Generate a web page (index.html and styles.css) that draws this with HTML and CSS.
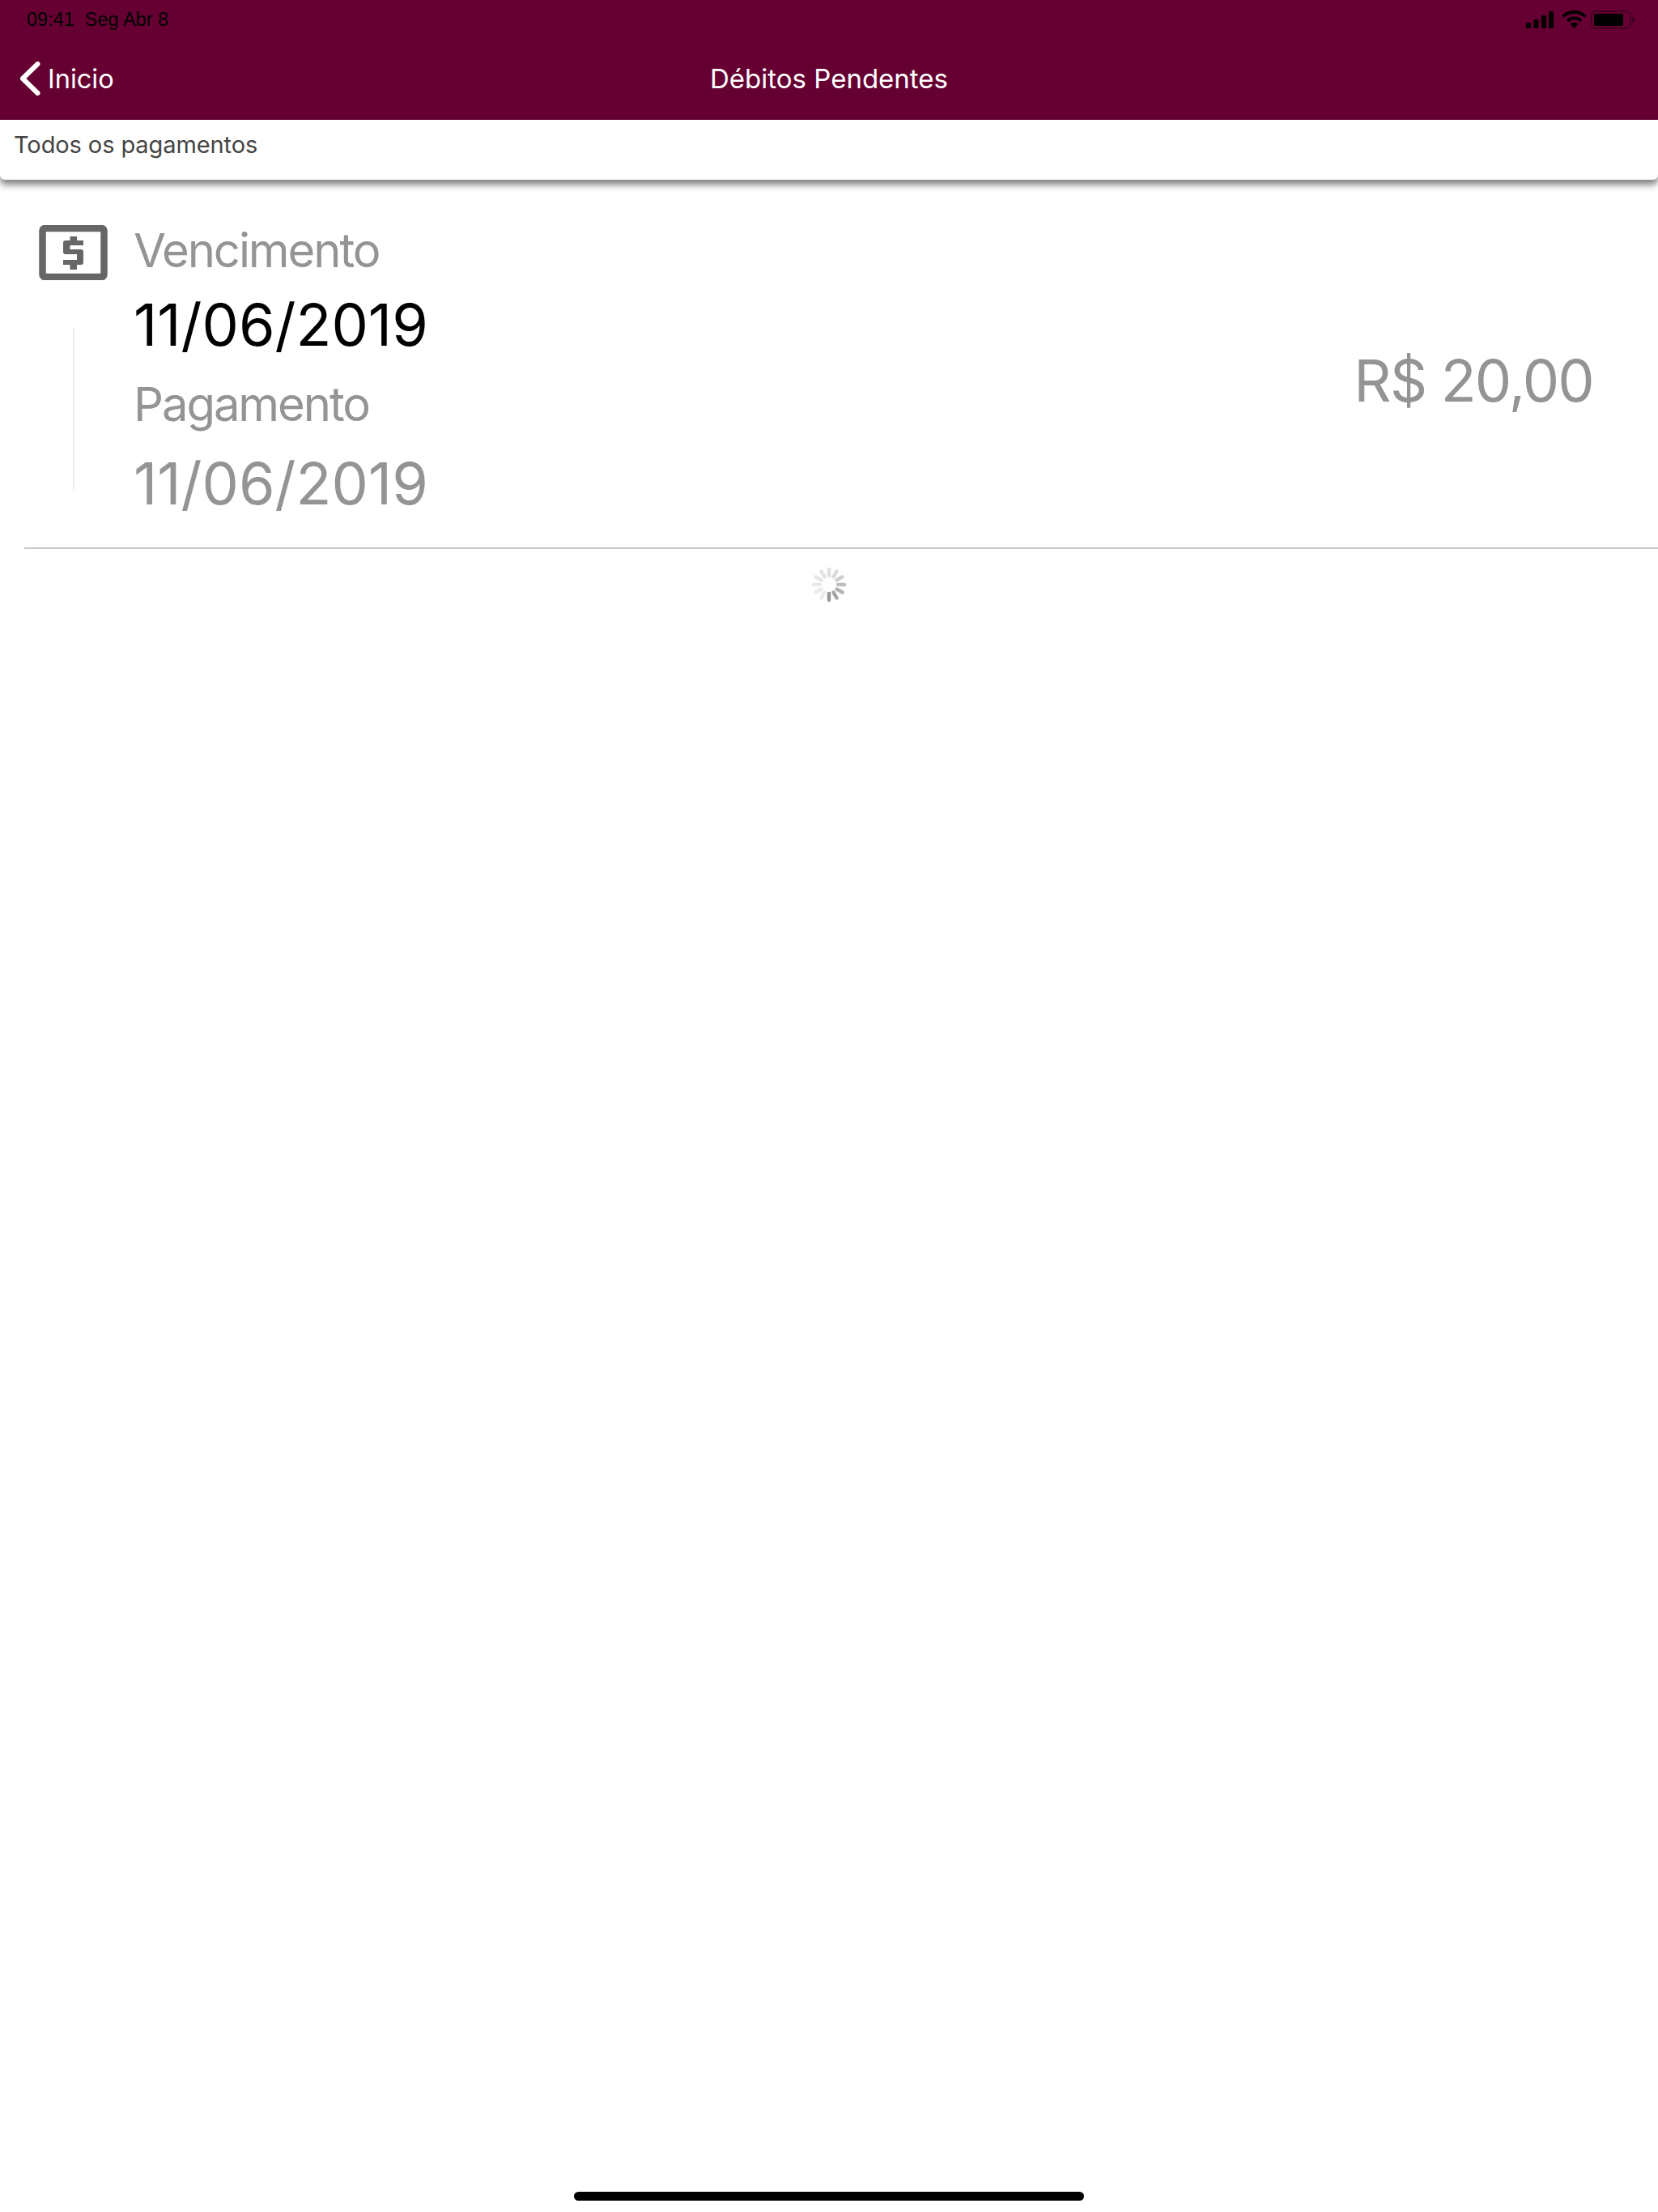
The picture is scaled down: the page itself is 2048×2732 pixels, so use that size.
FILE: index.html
```html
<!DOCTYPE html>
<html>
<head>
    <meta charset="utf-8">
    <title>Débitos Pendentes</title>
    <link rel="stylesheet" href="styles.css">
</head>
<body>

<div class="page">
    <div class="header">
        <!-- Status bar -->
        <div class="status-bar">
            <span class="status-time">09:41&nbsp; Seg Abr 8</span>
            <div class="status-icons">
                <svg class="icon-signal" width="34" height="21" viewBox="0 0 34 21">
                    <rect x="0" y="14" width="6" height="7" rx="1.5"/>
                    <rect x="9.5" y="10" width="6" height="11" rx="1.5"/>
                    <rect x="19" y="5" width="6" height="16" rx="1.5"/>
                    <rect x="28" y="0" width="6" height="21" rx="1.5"/>
                </svg>
                <svg class="icon-wifi" width="31" height="22" viewBox="0 0 31 22">
                    <path d="M15.5 0C9.6 0 4.3 2.3.3 6.1l2.6 2.7C6.2 5.700 10.600 3.800 15.500 3.800s9.300 1.900 12.600 5l2.600-2.700C26.700 2.300 21.400 0 15.500 0z"/>
                    <path d="M15.500 7.500c-3.800 0-7.300 1.500-9.900 3.900l2.700 2.700c1.900-1.700 4.400-2.800 7.200-2.800s5.300 1.100 7.200 2.800l2.700-2.700c-2.600-2.400-6.100-3.900-9.900-3.900z"/>
                    <path d="M15.500 14.800c-2 0-3.700.7-5 1.900l5 5.300 5-5.300c-1.300-1.200-3-1.900-5-1.900z"/>
                </svg>
                <div class="battery">
                    <div class="battery-fill"></div>
                </div>
                <div class="battery-nub"></div>
            </div>
        </div>

        <!-- Navigation bar -->
        <div class="nav-bar">
            <div class="nav-back">
                <svg width="26" height="42" viewBox="0 0 26 42">
                    <path d="M22.500 3 L4 21 L22.500 39" fill="none" stroke="#fff" stroke-width="6" stroke-linecap="round" stroke-linejoin="round"/>
                </svg>
                <span>Inicio</span>
            </div>
            <div class="nav-title">Débitos Pendentes</div>
            <div></div>
        </div>
    </div>

    <div class="filter-bar">Todos os pagamentos</div>

    <!-- Payment row -->
    <div class="payment-row">
        <div class="payment-side">
            <svg class="payment-icon" width="85" height="68" viewBox="0 0 85 68">
                <rect x="4.500" y="4" width="76" height="60" rx="3" fill="none" stroke="#666" stroke-width="8.500"/>
                <path d="M38.500 14h8.500v5h8v6H38.500v5H52a3 3 0 0 1 3 3v13a3 3 0 0 1-3 3h-5v6h-8.500v-6H30v-6h17v-7H33a3 3 0 0 1-3-3V22a3 3 0 0 1 3-3h5.500z" fill="#666"/>
            </svg>
            <div class="payment-rule"></div>
        </div>
        <div class="payment-dates">
            <div class="date-label date-label-first">Vencimento</div>
            <div class="date-value date-value-due">11/06/2019</div>
            <div class="date-label">Pagamento</div>
            <div class="date-value">11/06/2019</div>
        </div>
        <div class="payment-amount">R$ 20,00</div>
    </div>

    <!-- Loading spinner -->
    <div class="spinner-wrap">
        <svg width="44" height="44" viewBox="-22 -22 44 44">
            <g stroke-width="4.500" stroke-linecap="round">
                <line x1="0" y1="-11" x2="0" y2="-19" stroke="#e0e0e0"/>
                <line x1="0" y1="-11" x2="0" y2="-19" stroke="#dcdcdc" transform="rotate(30)"/>
                <line x1="0" y1="-11" x2="0" y2="-19" stroke="#d0d0d0" transform="rotate(60)"/>
                <line x1="0" y1="-11" x2="0" y2="-19" stroke="#bdbdbd" transform="rotate(90)"/>
                <line x1="0" y1="-11" x2="0" y2="-19" stroke="#b2b2b2" transform="rotate(120)"/>
                <line x1="0" y1="-11" x2="0" y2="-19" stroke="#a6a6a6" transform="rotate(150)"/>
                <line x1="0" y1="-11" x2="0" y2="-19" stroke="#999" transform="rotate(180)"/>
                <line x1="0" y1="-11" x2="0" y2="-19" stroke="#ececec" transform="rotate(210)"/>
                <line x1="0" y1="-11" x2="0" y2="-19" stroke="#eaeaea" transform="rotate(240)"/>
                <line x1="0" y1="-11" x2="0" y2="-19" stroke="#e8e8e8" transform="rotate(270)"/>
                <line x1="0" y1="-11" x2="0" y2="-19" stroke="#e6e6e6" transform="rotate(300)"/>
                <line x1="0" y1="-11" x2="0" y2="-19" stroke="#e3e3e3" transform="rotate(330)"/>
            </g>
        </svg>
    </div>

    <div class="home-indicator"></div>
</div>

</body>
</html>
```

FILE: styles.css
```css
html, body {
    margin: 0;
    padding: 0;
    background-color: #fff;
}

.page {
    height: 2732px;
    display: flex;
    flex-direction: column;
    overflow: hidden;
    font-family: "Inter", "Liberation Sans", sans-serif;
}

/* Header with status bar and navigation */
.header {
    height: 148px;
    background-color: #660033;
    color: #fff;
}

.status-bar {
    height: 40px;
    padding: 12px 29px 0 33px;
    box-sizing: border-box;
    display: flex;
    justify-content: space-between;
}

.status-time {
    font-family: "Liberation Sans", sans-serif;
    font-size: 23.5px;
    line-height: 24px;
    color: #000;
    white-space: nowrap;
}

.status-icons {
    display: flex;
    align-items: flex-start;
}

.icon-signal {
    margin-top: 2px;
    margin-right: 10px;
}

.icon-wifi {
    margin-top: 1px;
    margin-right: 5px;
}

.battery {
    width: 50px;
    height: 23px;
    margin-top: 1px;
    padding: 2px;
    box-sizing: border-box;
    border: 2px solid rgba(0, 0, 0, 0.35);
    border-radius: 6px;
}

.battery-fill {
    width: 36px;
    height: 15px;
    background-color: #000;
    border-radius: 2px;
}

.battery-nub {
    width: 3px;
    height: 8px;
    margin-top: 8px;
    margin-left: 1px;
    background-color: rgba(0, 0, 0, 0.35);
    border-radius: 0 3px 3px 0;
}

.nav-bar {
    height: 108px;
    display: grid;
    grid-template-columns: 1fr auto 1fr;
    align-items: center;
    padding-top: 6px;
    box-sizing: border-box;
}

.nav-back {
    display: flex;
    align-items: center;
    gap: 9px;
    padding-left: 24px;
    font-size: 32.5px;
}

.nav-title {
    font-size: 33px;
}

/* White bar below the header */
.filter-bar {
    height: 74px;
    padding: 13px 17px 0;
    box-sizing: border-box;
    font-size: 29px;
    line-height: 36px;
    letter-spacing: -0.1px;
    color: #444;
    background-color: #fff;
    border-radius: 0 0 6px 6px;
    box-shadow: 0 6px 8px rgba(0, 0, 0, 0.5);
}

/* Payment row */
.payment-row {
    height: 456px;
    margin-left: 30px;
    display: flex;
    box-sizing: border-box;
    border-bottom: 2px solid #c8c7cc;
}

.payment-side {
    width: 135px;
    padding-left: 18px;
    padding-top: 56px;
    box-sizing: border-box;
    flex-shrink: 0;
}

.payment-icon {
    display: block;
}

.payment-rule {
    width: 2px;
    height: 200px;
    margin-top: 60px;
    margin-left: 42px;
    background-color: #eee;
}

.payment-dates {
    flex: 1;
    padding-top: 52px;
}

.date-label {
    font-size: 58px;
    line-height: 70px;
    letter-spacing: -2.1px;
    color: #949494;
    margin-top: 19px;
}

.date-label-first {
    margin-top: 0;
}

.date-value {
    font-size: 72px;
    line-height: 88px;
    color: #949494;
    margin-top: 19px;
}

.date-value-due {
    color: #000;
    margin-top: 13px;
}

.payment-amount {
    align-self: center;
    font-size: 72px;
    line-height: 88px;
    letter-spacing: -1.8px;
    color: #949494;
    padding-right: 80px;
    margin-top: 42px;
}

/* Spinner */
.spinner-wrap {
    display: flex;
    justify-content: center;
    padding-top: 22px;
}

.home-indicator {
    width: 630px;
    height: 11px;
    margin: auto auto 14px;
    background-color: #000;
    border-radius: 6px;
}
```
